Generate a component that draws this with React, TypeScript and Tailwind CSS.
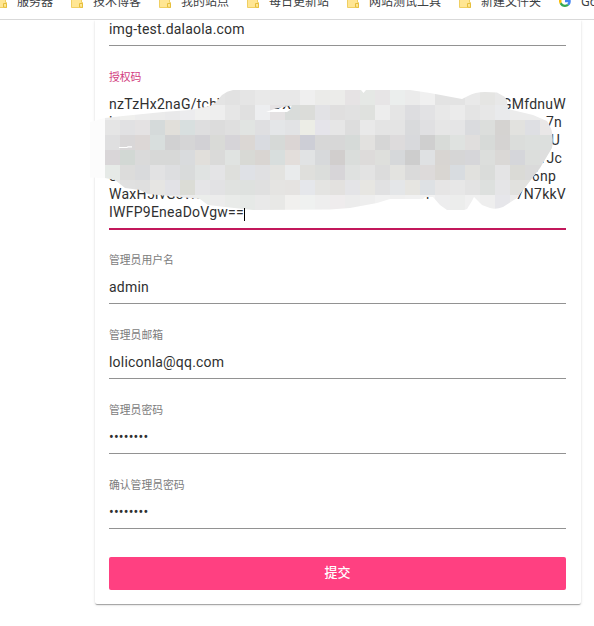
import type { ReactNode } from "react";

const CELL = 15;

// One row of mosaic cells per string, hex triplets from left to right.
const MOSAIC = [
  "e8e8e8 e8e8e8 e8e8e8 e8e8e8 e8e8e8 e8e8e8 e8e8e8 e4e4e4 e2e2e2 e5e5e5 e9e9e9 e8e8e8 e8e8e8 efefef ebebe9 ececea e6e3e4 e5e8e5 e7e5e6 ebeeed ebebeb f0f0f0 e3e3e3 e3e3e3 e9e9e9 e5e5e3 e8e8e8 e8e8e8 e8e8e8 e8e8e8",
  "ececec f0f0ee ededed ebebeb e9e9ea ececee f0f0ef eeeeee e6e6e6 e0e0e0 edeef0 e5e2e3 d9dcda dbdcd9 e2e2e5 e0dfdf e1e1e1 dfe1de ededed e5e5e5 dddde0 e2e2e4 e8e8e8 ebebeb e4e4e4 e7e7e7 e9eaec ececec ececec ececec",
  "e5e5e5 e1e1e3 e4e2e3 d5dada e1dfda d8dfdf dededf dcdcdc dfdfdf e1e4e2 dfdfe1 e4e6e8 e2e3e5 ecede6 e5e4ea e6e6e6 dddddd e9e9e9 e4e4e4 e4e4e4 d9dadc e0e0e2 e6e6e6 e5e5e6 dadbde dcdedc d5d3d1 e2e2df dedfe3 e9e7e7",
  "dfdfe0 d9d7d8 dcd7d6 d8dedd d1d1d2 d5d5d6 d2d1d5 d9dad7 d6d4d8 dbd7d4 d9dbe0 d6d9d7 dbd5d4 cdced6 d7d7d7 d7d7d7 d6dad8 e2e1df d6d6d6 dddbdc d8d9dc cfcfcf d8dbd8 dfe2e0 e0dedd d7dad8 d5d3d2 dbdddb dcdfdd dcdfdd",
  "d9d6d8 d2d8d4 dadada d7d8d7 d7d8d7 d9dbdd e1dfdb dadad9 e0e3e1 d8d9d5 d9d5d2 d8dedd e3dedb e1e3e4 d7d9db d1cecd dadddb dddbda dedfdc d6d8da cdcdcd dfe1e3 d8d5d2 d6d6d6 d6d6d9 dcdedc dad8d6 d5d6da dcdedc dedede",
  "e6eae7 dcdcdb d9dadc e2e2e3 dddee0 d9dbdb e0e3e2 e4e4e6 dedfdc dfe1e6 e0e0e2 e3e3e0 e9ebec dfdfdc dbdddb d7d5d8 dfe1e0 e3e3e3 dcdcdc e3e3e0 dadada dddada d9d6d2 d8dce0 e1e1de dadcda e4e4e5 dadad6 dadada dadada",
  "e6e6e6 e0e0e0 dfdfdf e6e5e3 e2e2e6 dbdcd6 e5e5e7 e2e2e4 e0e2e0 dee1df e0e0e0 e5e4e2 e5e3e1 e5e7eb e4e4e2 e3e1df e4e4e7 e7e6e2 e1e1e2 e4e6e8 e6e5e1 dee1e4 e6e5e5 e7e7e7 e3e3e3 dde0de e5e5e7 e1e1de e1e1de e1e1de",
  "ebebeb ebebeb ebebeb ebebeb ebebeb ebebeb ebedeb ececec e9ebe9 e6e9e7 e9e9e9 e8e8e6 f1f0ee eff1f0 eeeeee efeced ececec eeeeee f1f1f1 f0f0f0 f1f1f1 f2f2f2 ededee ecedec f0f0f0 eeeeee e6e6ea ececec ececec ececec",
].map((row) => row.split(" "));

const OUTLINE =
  "M90 122 L105 118 L123 116 L163 112 L190 110 L210 106 L215 103 L222 95 Q227 91 233 90 L361 90 L363.5 93 L366 90 L410 90 L430 93 L462 99 L468 96 Q475 92 485 92 L497 92.5 L505 97 L507 101 L508 109 L533 115 L547 121 Q555 132 552 148 L540 168 L527 185 L517 198 L503 207 Q496 210 490 208 L482 205 L474 197 L472 201 L467 209 L464 210 L447 210 L440 205 L433 197 L425 197 L423 199 L390 199 L377 203 L350 208 L330 209.5 L253 210 L225 207 L208 205 L200 199 L148 194 L140 190 L125 188 L115 180 L105 178 L90 177.5 Z " +
  "M266 112 L275 108.7 L291.7 105.5 L290 110 L287 112 Z";

function Mosaic() {
  return (
    <svg
      className="pointer-events-none absolute -left-[19px] -top-[5px]"
      width="465"
      height="120"
      viewBox="90 90 465 120"
    >
      <clipPath id="smudge">
        <path d={OUTLINE} clipRule="evenodd" />
      </clipPath>
      <g clipPath="url(#smudge)" shapeRendering="crispEdges">
        <rect x="90" y="90" width="15" height="120" fill="#fcfcfc" />
        {MOSAIC.map((row, r) =>
          row.map((hex, c) => (
            <rect
              key={`${r}-${c}`}
              x={105 + c * CELL}
              y={90 + r * CELL}
              width={CELL}
              height={CELL}
              fill={`#${hex}`}
            />
          )),
        )}
      </g>
      <path d="M119 147.5h8l1-.7h4" stroke="#fff" strokeWidth="1.2" fill="none" />
    </svg>
  );
}

function Folder() {
  return (
    <svg className="shrink-0" width="12" height="14" viewBox="0 0 12 14">
      <path d="M.5 1.5h10v7h1v5H.5z" fill="#ffe693" stroke="#f0cf62" />
      <path d="M8.5 13V9.5h3v4z" fill="#ffe693" stroke="#e6bf3c" />
    </svg>
  );
}

function GoogleMark() {
  return (
    <svg className="shrink-0" width="12" height="12" viewBox="0 0 48 48">
      <path fill="#4285F4" d="M47 24.5c0-1.600-.2-3.200-.5-4.500H24v9h13c-.6 3-2.300 5.500-4.800 7.200l7.500 5.900C44.300 38 47 31.900 47 24.500z" />
      <path fill="#34A853" d="M24 48c6.500 0 11.900-2.100 15.800-5.800l-7.500-5.900c-2.200 1.400-5 2.300-8.300 2.300-6.300 0-11.600-4.200-13.500-9.900l-7.900 6.100C6.500 42.600 14.600 48 24 48z" />
      <path fill="#FBBC05" d="M10.500 28.700a14.500 14.500 0 0 1 0-9.300l-7.900-6.100a24 24 0 0 0 0 21.500z" />
      <path fill="#EA4335" d="M24 9.500c3.500 0 6.700 1.200 9.200 3.600l6.900-6.900A24 24 0 0 0 2.600 13.200l7.900 6.200C12.400 13.700 17.700 9.500 24 9.500z" />
    </svg>
  );
}

const BOOKMARKS = ["服务器", "技术博客", "我的站点", "每日更新站", "网站测试工具", "新建文件夹"];

function BookmarkBar() {
  return (
    <header className="relative z-10 h-5 overflow-hidden border-b border-[#d9d9d9] bg-white">
      <div className="-ml-[5px] -mt-[7px] flex w-[700px] gap-[18px] font-['Liberation_Sans','Noto_Sans_CJK_SC',sans-serif] text-[12px] leading-4 text-[#3c4043]">
        {BOOKMARKS.map((name) => (
          <div key={name} className="flex items-center gap-[10px] whitespace-nowrap">
            <Folder />
            <span className="-mb-px pt-px">{name}</span>
          </div>
        ))}
        <div className="flex items-center gap-[10px]">
          <GoogleMark />
          <span className="-mb-px pt-px font-['Noto_Sans']">Google</span>
        </div>
      </div>
    </header>
  );
}

function Label({ children, active = false }: { children: ReactNode; active?: boolean }) {
  return (
    <div className={`h-4 text-[10.8px] leading-[18px] ${active ? "text-[#d2407f]" : "text-[#7c7c7c]"}`}>
      {children}
    </div>
  );
}

function Value({ children }: { children: ReactNode }) {
  return (
    <div className="h-[25px] border-b border-[#929292] text-[14px] leading-4 tracking-[0.2px] text-[#303030]">
      {children}
    </div>
  );
}

function Field({ label, value }: { label: string; value: string }) {
  return (
    <div className="flex flex-col gap-[11px] pt-[23px]">
      <Label>{label}</Label>
      <Value>{value}</Value>
    </div>
  );
}

const CODE_LINES = [
  { left: "nzTzHx2naG/tcbV", middle: "DX", gap: "pl-[164px]", right: "GMfdnuW", end: "pr-0" },
  { left: "l", right: "7n", end: "pr-1" },
  { left: "", right: "U", end: "pr-[6px]" },
  { left: "", right: "1Jc", end: "pr-1" },
  { left: "o", right: "6np", end: "pr-[10px]" },
  { left: "WaxH5IvG3Wm", middle: "r", gap: "pl-[317px]", right: "7N7kkV", end: "pr-0" },
];

function LicenseField() {
  return (
    <div className="-mb-px flex flex-col gap-[10px] pt-[23px]">
      <Label active>授权码</Label>
      <div className="relative h-[135px] border-b-2 border-[#c2185b] text-[14px] leading-[18px] tracking-[0.25px] text-[#303030]">
        {CODE_LINES.map((line) => (
          <div key={line.right} className="grid h-[18px]">
            <span className="col-start-1 row-start-1">{line.left}</span>
            {line.middle && <span className={`col-start-1 row-start-1 ${line.gap}`}>{line.middle}</span>}
            <span className={`col-start-1 row-start-1 text-right ${line.end}`}>{line.right}</span>
          </div>
        ))}
        <Mosaic />
        <div className="relative flex h-[18px] items-center">
          <span>IWFP9EneaDoVgw==</span>
          <span className="mt-1 h-[13px] w-px bg-black" />
        </div>
      </div>
    </div>
  );
}

export default function App() {
  return (
    <div className="h-[626px] w-[594px] overflow-hidden bg-white font-[Roboto,'Noto_Sans_CJK_SC',sans-serif]">
      <BookmarkBar />
      <main className="ml-[95px] h-[584px] w-[486px] rounded-b-[2px] bg-white pl-[14px] pr-[15px] pt-px shadow-[0_2px_1px_-1px_rgba(0,0,0,0.2),0_1px_1px_0_rgba(0,0,0,0.14),0_1px_3px_0_rgba(0,0,0,0.12)]">
        <Value>img-test.dalaola.com</Value>
        <LicenseField />
        <Field label="管理员用户名" value="admin" />
        <Field label="管理员邮箱" value="loliconla@qq.com" />
        <Field label="管理员密码" value="••••••••" />
        <Field label="确认管理员密码" value="••••••••" />
        <button className="mt-7 flex h-[33px] w-full items-center justify-center rounded-[2px] bg-[#ff4081] pb-0.5 text-[13px] font-medium text-white">
          提交
        </button>
      </main>
    </div>
  );
}
